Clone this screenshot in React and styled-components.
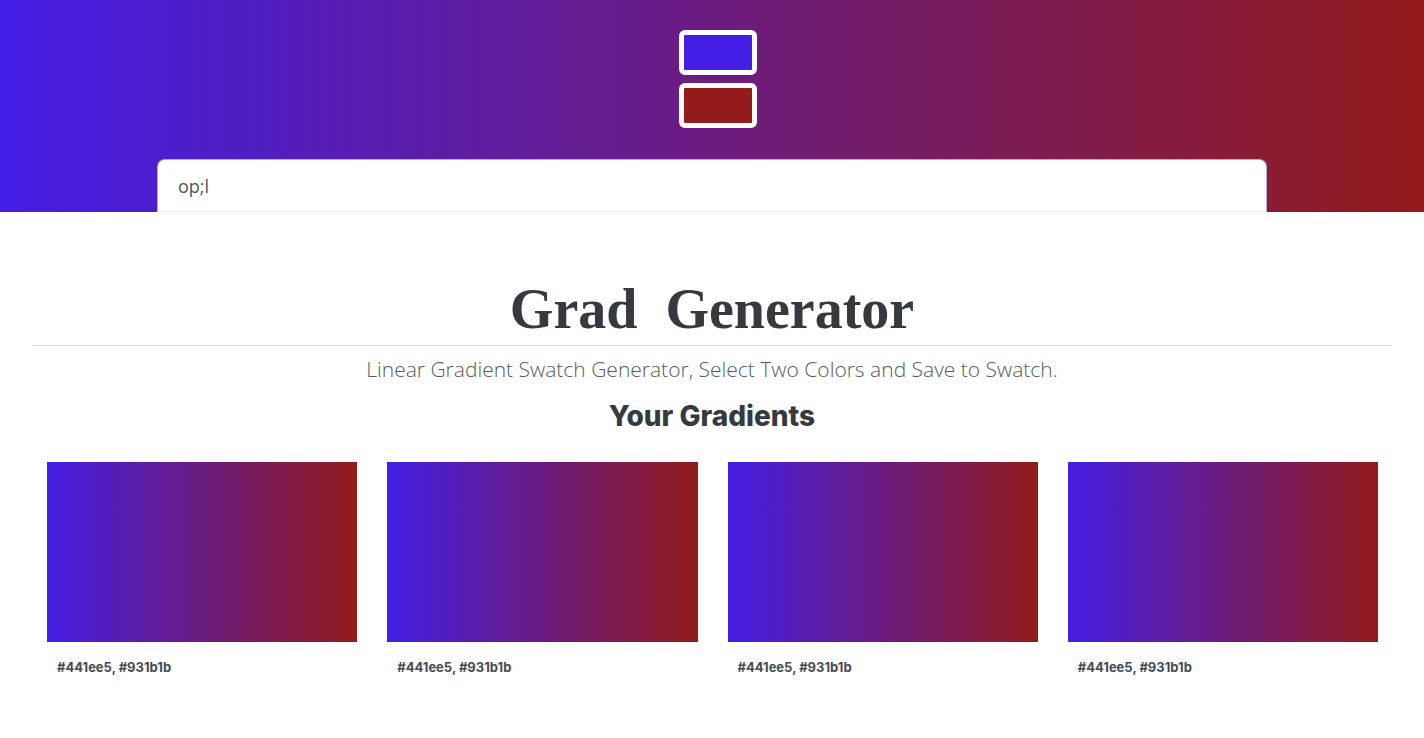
import React from 'react'
import styled, { createGlobalStyle } from 'styled-components'

const FROM = '#441ee5'
const TO = '#931b1b'

const swatches = [
  { id: 1, from: FROM, to: TO },
  { id: 2, from: FROM, to: TO },
  { id: 3, from: FROM, to: TO },
  { id: 4, from: FROM, to: TO },
]

const GlobalStyle = createGlobalStyle`
  * { box-sizing: border-box; }
  body {
    margin: 0;
    background: #fff;
    font-family: "Open Sans", "Liberation Sans", sans-serif;
    color: #343a40;
  }
`

const App = () => {
  return (
    <>
      <GlobalStyle />
      <Header $from={FROM} $to={TO}>
        <Logo>
          <LogoBlock $color={FROM} />
          <LogoBlock $color={TO} />
        </Logo>
        <SearchInput defaultValue="op;l" autoFocus />
      </Header>
      <Main>
        <Title>Grad&nbsp; Generator</Title>
        <Divider />
        <Subtitle>Linear Gradient Swatch Generator, Select Two Colors and Save to Swatch.</Subtitle>
        <SectionTitle>Your Gradients</SectionTitle>
        <Grid>
          {swatches.map((s) => (
            <Card key={s.id}>
              <Swatch $from={s.from} $to={s.to} />
              <Label>{s.from}, {s.to}</Label>
            </Card>
          ))}
        </Grid>
      </Main>
    </>
  )
}

const Header = styled.header`
  height: 212px;
  overflow: hidden;
  display: flex;
  flex-direction: column;
  align-items: center;
  padding-top: 31px;
  background: linear-gradient(to right, ${(p) => p.$from}, ${(p) => p.$to});
`

const Logo = styled.div`
  display: flex;
  flex-direction: column;
  flex-shrink: 0;
  gap: 8px;
  margin-left: 12px;
`

const LogoBlock = styled.div`
  width: 78px;
  height: 45px;
  border: 5px solid #fff;
  border-radius: 6px;
  background: ${(p) => p.$color};
`

const SearchInput = styled.input`
  margin-top: 31px;
  width: 1110px;
  height: 53px;
  flex-shrink: 0;
  padding: 0 20px;
  border: 1px solid rgba(120, 80, 200, 0.5);
  border-bottom-color: #eee;
  border-radius: 8px 8px 0 0;
  background: #fff;
  font-family: "Open Sans", sans-serif;
  font-size: 18px;
  color: #555;
  outline: none;
  caret-color: #333;
`

const Main = styled.main`
  padding: 0 32px 40px;
`

const Title = styled.h1`
  margin: 62px 0 0;
  text-align: center;
  font-family: "Liberation Serif", "Times New Roman", serif;
  font-weight: 700;
  font-size: 56px;
  line-height: 70px;
  color: #343a40;
`

const Divider = styled.hr`
  margin: 1px 0 0;
  border: 0;
  border-top: 1px solid #e2e2e2;
`

const Subtitle = styled.p`
  margin: 9px 0 0;
  text-align: center;
  font-family: "Open Sans", sans-serif;
  font-weight: 300;
  font-size: 21px;
  line-height: 28px;
  color: #555b61;
`

const SectionTitle = styled.h2`
  margin: 16px 0 0;
  text-align: center;
  font-family: Inter, sans-serif;
  font-weight: 800;
  font-size: 28px;
  line-height: 34px;
  color: #343a40;
`

const Grid = styled.div`
  display: grid;
  grid-template-columns: repeat(4, 1fr);
  gap: 30px;
  padding: 0 14px 0 15px;
  margin-top: 29px;
`

const Card = styled.div`
  display: flex;
  flex-direction: column;
`

const Swatch = styled.div`
  height: 180px;
  background: linear-gradient(to right, ${(p) => p.$from}, ${(p) => p.$to});
`

const Label = styled.p`
  margin: 17px 0 0;
  padding: 0 10px;
  font-family: Inter, sans-serif;
  font-weight: 700;
  font-size: 13px;
  color: #454b52;
`

export default App
